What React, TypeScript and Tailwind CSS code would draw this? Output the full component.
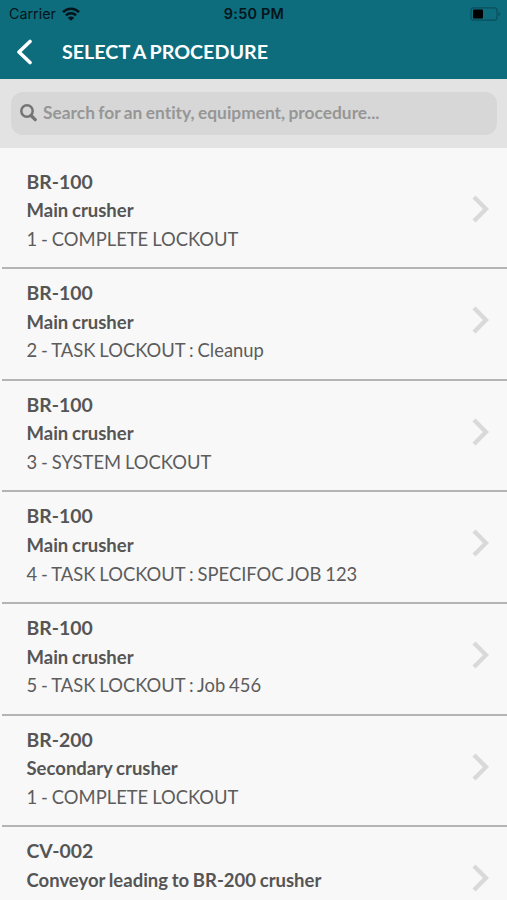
import React from 'react';

interface Procedure {
  code: string;
  name: string;
  title: string;
}

const PROCEDURES: Procedure[] = [
  { code: 'BR-100', name: 'Main crusher', title: '1 - COMPLETE LOCKOUT' },
  { code: 'BR-100', name: 'Main crusher', title: '2 - TASK LOCKOUT : Cleanup' },
  { code: 'BR-100', name: 'Main crusher', title: '3 - SYSTEM LOCKOUT' },
  { code: 'BR-100', name: 'Main crusher', title: '4 - TASK LOCKOUT : SPECIFOC JOB 123' },
  { code: 'BR-100', name: 'Main crusher', title: '5 - TASK LOCKOUT : Job 456' },
  { code: 'BR-200', name: 'Secondary crusher', title: '1 - COMPLETE LOCKOUT' },
  { code: 'CV-002', name: 'Conveyor leading to BR-200 crusher', title: '' },
];

const WifiIcon = () => (
  <svg width="18" height="14" viewBox="0 0 18 14" fill="none" stroke="#03141a" strokeWidth="2.6">
    <path d="M1 5.2C5.4 .6 12.6 .6 17 5.2" />
    <path d="M3.9 8.4c2.9-2.8 7.3-2.8 10.2 0" />
    <path d="M9 13.8 5.7 10.7c1.8-1.7 4.8-1.7 6.6 0z" fill="#03141a" stroke="none" />
  </svg>
);

const BatteryIcon = () => (
  <svg width="31" height="14" viewBox="0 0 31 14" fill="none">
    <rect x="1" y=".8" width="26" height="12.4" rx="2.5" stroke="#0a4f5c" strokeWidth="1.2" />
    <rect x="3" y="2.5" width="10" height="9" rx="1" fill="#000" />
    <path d="M28.5 4.8c2.2.8 2.2 3.6 0 4.4z" fill="#0a4f5c" />
  </svg>
);

const StatusBar = () => (
  <div className="grid h-[27px] grid-cols-3 items-center pl-[9px] pr-[6px] font-['Inter',sans-serif] text-[#03141a]">
    <div className="flex items-center gap-[6px] text-[14.3px]">
      <span>Carrier</span>
      <WifiIcon />
    </div>
    <span className="pr-[2px] text-center text-[14.4px] font-semibold tracking-[0.25px]">9:50 PM</span>
    <div className="flex justify-end">
      <BatteryIcon />
    </div>
  </div>
);

const ProcedureRow = ({ procedure }: { procedure: Procedure }) => (
  <li className="ml-[2px] flex h-[111.6px] shrink-0 justify-between border-b-2 border-[#b4b4b4] pl-[24.5px] pr-[18px] pt-[10px] text-[#555]">
    <div className="text-[18.5px] leading-[28.6px] whitespace-nowrap [word-spacing:-0.8px]">
      <p className="text-[19.4px] font-bold">{procedure.code}</p>
      <p className="font-bold">{procedure.name}</p>
      <p className="text-[18.4px] text-[#5c5c5c]">{procedure.title}</p>
    </div>
    <svg className="mt-[27px]" width="17" height="28" viewBox="0 0 17 28" fill="none" stroke="#d9d9d9" strokeWidth="4.4">
      <path d="M2 2 14 14 2 26" />
    </svg>
  </li>
);

const App: React.FC = () => {
  return (
    <div className="flex h-[900px] w-[507px] flex-col overflow-hidden bg-[#f8f8f8] font-['Lato',sans-serif] [font-variant-ligatures:none]">
      <header className="h-[79px] shrink-0 bg-[#0e6d7d]">
        <StatusBar />
        <div className="flex h-[50px] items-center pl-4">
          <svg width="17" height="26" viewBox="0 0 17 26" fill="none" stroke="#fff" strokeWidth="3.6" strokeLinecap="round" strokeLinejoin="round">
            <path d="M14 2.5 3 13 14 23.5" />
          </svg>
          <h1 className="ml-[29px] text-[19.7px] font-bold text-white [word-spacing:-1px]">SELECT A PROCEDURE</h1>
        </div>
      </header>

      <div className="h-[69px] shrink-0 bg-[#e3e3e3] pl-[11px] pr-[10px] pt-[13px]">
        <div className="flex h-[43px] items-center rounded-[12px] bg-[#d7d7d7] pl-[9px]">
          <svg className="-mt-px" width="17" height="18" viewBox="0 0 17 18" fill="none" stroke="#747474">
            <circle cx="7" cy="7" r="5.7" strokeWidth="2.5" />
            <path d="m11 11.5 4.2 4.2" strokeWidth="3.2" strokeLinecap="round" />
          </svg>
          <input
            type="text"
            placeholder="Search for an entity, equipment, procedure..."
            className="ml-[6px] flex-1 bg-transparent text-[17.35px] font-bold outline-none [word-spacing:-0.8px] placeholder:text-[#969696]"
          />
        </div>
      </div>

      {/* Procedure list */}
      <ul className="flex flex-col pt-[9.7px]">
        {PROCEDURES.map((p, idx) => (
          <ProcedureRow key={idx} procedure={p} />
        ))}
      </ul>
    </div>
  );
};

export default App;
